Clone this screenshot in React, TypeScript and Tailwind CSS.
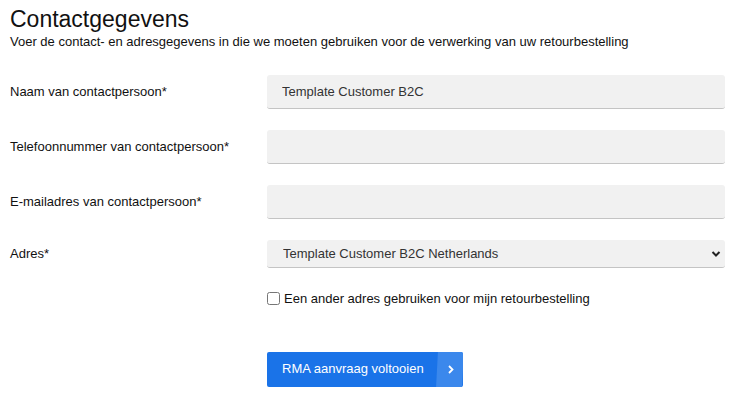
import { useState } from 'react';

const font = { fontFamily: '"Liberation Sans", Arial, sans-serif' };

function Field({ label, value }: { label: string; value?: string }) {
  return (
    <>
      <label className="text-[13px] text-[#111]">{label}</label>
      <input
        defaultValue={value}
        className="h-[34px] w-full rounded-[3px] border-b border-[#c4c4c4] bg-[#f1f1f1] px-[15px] text-[13px] text-[#333] outline-none"
      />
    </>
  );
}

export default function App() {
  const [other, setOther] = useState(false);

  return (
    <div className="min-h-screen bg-white px-[10px] pt-[5px] text-[#111]" style={font}>
      <h1 className="text-[23px] leading-[29px] text-[#111]">Contactgegevens</h1>
      <p className="text-[13px] leading-[16px] text-[#111]">
        Voer de contact- en adresgegevens in die we moeten gebruiken voor de verwerking van uw retourbestelling
      </p>

      <div className="mt-[25px] grid grid-cols-[257px_458px] items-center gap-y-[21px]">
        <Field label="Naam van contactpersoon*" value="Template Customer B2C" />
        <Field label="Telefoonnummer van contactpersoon*" />
        <Field label="E-mailadres van contactpersoon*" />

        <label className="text-[13px] text-[#111]">Adres*</label>
        <div className="relative">
          <select className="h-[28px] w-full appearance-none rounded-[3px] border-b border-[#c4c4c4] bg-[#f1f1f1] pl-[16px] text-[13px] text-[#333] outline-none">
            <option>Template Customer B2C Netherlands</option>
          </select>
          <svg
            className="pointer-events-none absolute right-[4px] top-[10px]"
            width="10"
            height="8"
            viewBox="0 0 10 8"
          >
            <path d="M1.5 2 L5 5.5 L8.5 2" fill="none" stroke="#222" strokeWidth="2" />
          </svg>
        </div>

        <div />
        <label className="flex items-center gap-[4px] text-[13px] text-[#111]">
          <input
            type="checkbox"
            checked={other}
            onChange={(e) => setOther(e.target.checked)}
            className="m-0 h-[13px] w-[13px]"
          />
          Een ander adres gebruiken voor mijn retourbestelling
        </label>

        <div />
        <div className="mt-[22px]">
          <button className="flex h-[35px] w-[196px] overflow-hidden rounded-[2px] bg-[#1a73e8] text-[13px] text-white">
            <span className="flex h-full flex-1 items-center pl-[15px]">RMA aanvraag voltooien</span>
            <span className="relative flex h-full w-[24px] items-center justify-center">
              <span className="absolute inset-y-0 -left-[2px] right-0 -skew-x-[3deg] bg-[#3b88ec]" />
              <svg className="relative" width="6" height="9" viewBox="0 0 6 9">
                <path d="M1 1 L4.5 4.5 L1 8" fill="none" stroke="#fff" strokeWidth="1.8" />
              </svg>
            </span>
          </button>
        </div>
      </div>
    </div>
  );
}
